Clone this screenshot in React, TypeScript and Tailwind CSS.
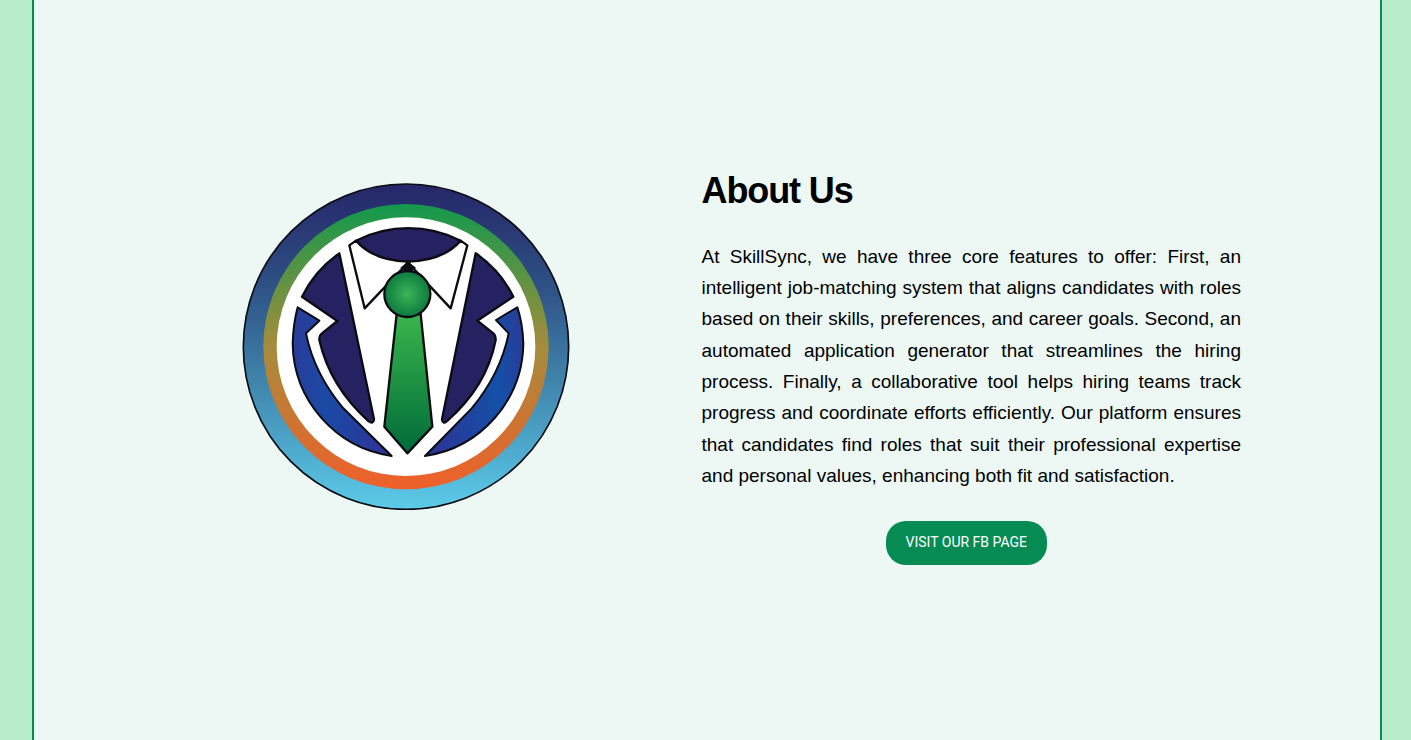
function Logo() {
  const ink = { stroke: "#0b0b12", strokeWidth: 7, strokeLinejoin: "round" as const };
  return (
    <svg viewBox="36 36 984 984" className="block w-[328px] h-[328px] shrink-0 mt-[12px]">
      <defs>
        <linearGradient id="outer" x1="0" y1="0" x2="0" y2="1">
          <stop offset="0" stopColor="#262668" />
          <stop offset="0.3" stopColor="#2d4f83" />
          <stop offset="0.6" stopColor="#3f83ab" />
          <stop offset="1" stopColor="#5ccbe9" />
        </linearGradient>
        <linearGradient id="ring" x1="0" y1="0" x2="0" y2="1">
          <stop offset="0" stopColor="#12994c" />
          <stop offset="0.5" stopColor="#a58c3c" />
          <stop offset="1" stopColor="#f05f2a" />
        </linearGradient>
        <linearGradient id="blueL" x1="0" y1="0" x2="1" y2="0.2">
          <stop offset="0" stopColor="#2b3a98" />
          <stop offset="0.45" stopColor="#1b4aa6" />
          <stop offset="1" stopColor="#2a3797" />
        </linearGradient>
        <linearGradient id="blueR" x1="1" y1="0" x2="0" y2="0.2">
          <stop offset="0" stopColor="#2b3a98" />
          <stop offset="0.35" stopColor="#1450a8" />
          <stop offset="1" stopColor="#2a3797" />
        </linearGradient>
        <linearGradient id="tie" x1="0" y1="0" x2="0" y2="1">
          <stop offset="0" stopColor="#3ab54c" />
          <stop offset="1" stopColor="#006b39" />
        </linearGradient>
        <radialGradient id="knot" cx="0.5" cy="0.5" r="0.55">
          <stop offset="0" stopColor="#3cb557" />
          <stop offset="1" stopColor="#07743c" />
        </radialGradient>
      </defs>
      <circle cx="528" cy="530" r="488" fill="url(#outer)" stroke="#0b0b12" strokeWidth="5" />
      <circle cx="528" cy="530" r="428" fill="url(#ring)" />
      <circle cx="528" cy="530" r="388" fill="#ffffff" />

      <path d="M328 250 L432 748 Q430 764 416 754 Q300 650 268 510 Q268 496 276 490 L322 453 L216 380 A346 346 0 0 1 328 250 Z" fill="#262262" {...ink} />
      <path d="M737 250 L636 748 Q638 764 650 754 Q770 650 797 510 Q797 496 790 490 L742 452 L850 380 A346 346 0 0 0 737 250 Z" fill="#262262" {...ink} />

      <path d="M203 412 L268 452 L228 490 Q252 610 340 715 L485 858 A346 346 0 0 1 188 520 Q190 460 203 412 Z" fill="url(#blueL)" stroke="#0b0b12" strokeWidth="6" strokeLinejoin="round" />
      <path d="M862 412 L798 450 L836 490 Q812 610 725 715 L585 858 A346 346 0 0 0 880 520 Q878 460 862 412 Z" fill="url(#blueR)" stroke="#0b0b12" strokeWidth="6" strokeLinejoin="round" />

      <path d="M212 408 L302 450 L258 492 Q280 612 360 715 L510 862" fill="none" stroke="#dcdcf4" strokeWidth="1.5" />
      <path d="M855 408 L770 450 L812 492 Q790 612 705 715 L560 862" fill="none" stroke="#dcdcf4" strokeWidth="1.5" />

      <path d="M378 212 A346 346 0 0 1 692 212 Q640 272 534 275 Q430 272 378 212 Z" fill="#262262" {...ink} />
      <path d="M358 226 L378 212 Q430 272 534 275 L520 293 L404 415 Z" fill="#ffffff" {...ink} />
      <path d="M712 226 L692 212 Q640 272 534 275 L548 293 L662 415 Z" fill="#ffffff" {...ink} />
      <path d="M534 275 L558 293 L534 314 L511 293 Z" fill="#0b0b12" />

      <path d="M500 432 L463 770 L532 850 L607 770 L572 432 Z" fill="url(#tie)" {...ink} />
      <circle cx="532" cy="372" r="69" fill="url(#knot)" {...ink} />
    </svg>
  );
}

export default function App() {
  return (
    <div className="min-h-[740px] h-[740px] overflow-hidden bg-[#b8eccb]" style={{ fontFamily: '"Liberation Sans", Arial, sans-serif' }}>
      <div className="ml-[32px] w-[1350px] h-[740px] border-x-2 border-[#068b55] bg-[#edf8f4] flex items-start pl-[208px] pt-[170px] gap-[131.5px]">
        <Logo />
        <div className="w-[539.5px] shrink-0 flex flex-col items-center">
          <h2 className="w-full text-[36px] leading-[41px] font-bold text-black tracking-[-1.1px]">About Us</h2>
          <p className="w-full mt-[29.7px] text-[19px] leading-[31.35px] text-black text-justify">
            At SkillSync, we have three core features to offer: First, an intelligent job-matching system that aligns candidates with roles based on their skills, preferences, and career goals. Second, an automated application generator that streamlines the hiring process. Finally, a collaborative tool helps hiring teams track progress and coordinate efforts efficiently. Our platform ensures that candidates find roles that suit their professional expertise and personal values, enhancing both fit and satisfaction.
          </p>
          <a className="mt-[29.1px] mr-[10px] h-[44px] w-[161px] rounded-[20px] bg-[#068b55] text-white text-[14px] font-normal uppercase flex items-center justify-center" style={{ fontFamily: 'Roboto, sans-serif' }}>
            Visit our FB page
          </a>
        </div>
      </div>
    </div>
  );
}
